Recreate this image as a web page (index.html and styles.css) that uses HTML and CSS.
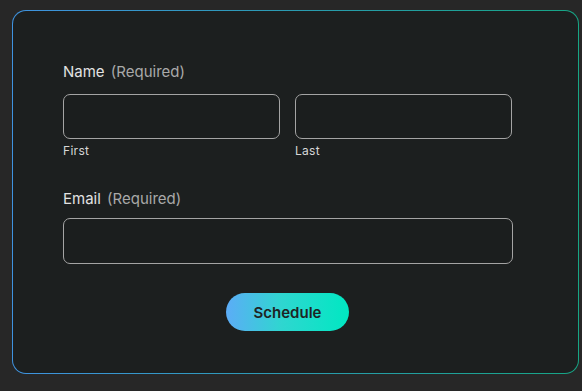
FILE: index.html
```html
<!DOCTYPE html>
<html>
    <head>
        <title>Schedule</title>
        <meta name="viewport" content="width=device-width, initial-scale=1">
        <link rel="stylesheet" href="styles.css">
    </head>
    <body>
        <form class="card">
            <div class="field">
                <div class="label">Name <span class="req">(Required)</span></div>
                <div class="name-row">
                    <div class="sub">
                        <input type="text" class="input">
                        <span class="hint">First</span>
                    </div>
                    <div class="sub">
                        <input type="text" class="input">
                        <span class="hint">Last</span>
                    </div>
                </div>
            </div>

            <div class="field field-email">
                <div class="label">Email <span class="req">(Required)</span></div>
                <input type="email" class="input input-wide">
            </div>

            <div class="actions">
                <button type="button" class="btn">Schedule</button>
            </div>
        </form>
    </body>
</html>
```

FILE: styles.css
```css
body, html {
    margin: 0;
    background-color: #272727;
    font-family: "Inter", "Liberation Sans", sans-serif;
}

body {
    padding: 10px 3px 0 12px;
}

.card {
    box-sizing: border-box;
    height: 364px;
    padding: 51px 50px 0 50px;
    border: 1.5px solid transparent;
    border-radius: 14px;
    background:
        linear-gradient(#1c1f1f, #1c1f1f) padding-box,
        linear-gradient(90deg, #3f93e0, #2a9bb0 50%, #16a585) border-box;
}

.field {
    margin-bottom: 30px;
}

.label {
    font-size: 15px;
    line-height: 20px;
    color: #e2e2e2;
    margin-bottom: 12px;
}

.field-email .label {
    margin-bottom: 9px;
}

.field-email {
    margin-bottom: 29px;
}

.req {
    color: #a9a9a9;
    margin-left: 2px;
}

.name-row {
    display: flex;
    gap: 15px;
}

.sub {
    display: flex;
    flex-direction: column;
}

.input {
    box-sizing: border-box;
    width: 217px;
    height: 45px;
    margin: 0;
    background-color: #1b1e1e;
    border: 1px solid #a4a4a4;
    border-radius: 7px;
    color: #eee;
    font-family: inherit;
}

.input-wide {
    width: 450px;
    height: 46px;
}

.hint {
    margin-top: 4px;
    font-size: 12px;
    line-height: 16px;
    letter-spacing: 0.3px;
    color: #d6d6d6;
}

.actions {
    display: flex;
    justify-content: center;
    width: 449px;
}

.btn {
    width: 123px;
    height: 38px;
    border: none;
    border-radius: 19px;
    background: linear-gradient(90deg, #5cacf7, #2fd6d0 45%, #00e8c2);
    color: #1e2424;
    font-family: inherit;
    font-size: 15px;
    font-weight: 600;
    cursor: pointer;
}
```
